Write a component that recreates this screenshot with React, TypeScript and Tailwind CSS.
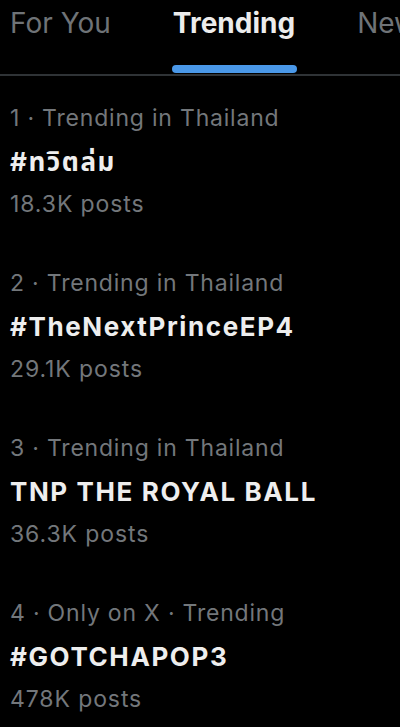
import React from 'react';

const trends = [
  { meta: '1 · Trending in Thailand', title: '#ทวิตล่ม', posts: '18.3K posts' },
  { meta: '2 · Trending in Thailand', title: '#TheNextPrinceEP4', posts: '29.1K posts' },
  { meta: '3 · Trending in Thailand', title: 'TNP THE ROYAL BALL', posts: '36.3K posts' },
  { meta: '4 · Only on X · Trending', title: '#GOTCHAPOP3', posts: '478K posts' },
];

const App: React.FC = () => {
  return (
    <div
      className="w-[400px] h-[727px] overflow-hidden bg-black text-[#e7e9ea]"
      style={{ fontFamily: 'Inter, "Noto Sans", "Noto Sans Thai", sans-serif' }}
    >
      <div className="relative h-[76px] border-b-2 border-[#2f3336]">
        <div className="flex items-start pt-[4px] whitespace-nowrap">
          <div className="ml-[10px] text-[28px] leading-[38px] text-[#6f7377]">For You</div>
          <div className="ml-[62px] flex flex-col items-center">
            <span className="text-[28px] leading-[38px] font-bold text-[#ececec]">Trending</span>
          </div>
          <div className="ml-[62px] text-[28px] leading-[38px] text-[#6f7377]">New</div>
        </div>
        <div className="absolute left-[172px] top-[65px] h-[8px] w-[125px] rounded-full bg-[#4a98e8]" />
      </div>

      <div className="pt-[21px]">
        {trends.map((t) => (
          <div key={t.title} className="px-[10px] pb-[36px]">
            <div className="text-[23px] leading-[43px] tracking-[0.8px] text-[#73777b]">{t.meta}</div>
            <div className="text-[26px] leading-[43px] tracking-[1.6px] font-bold text-[#eeeeee]">{t.title}</div>
            <div className="text-[23px] leading-[43px] tracking-[0.9px] text-[#73777b]">{t.posts}</div>
          </div>
        ))}
      </div>
    </div>
  );
};

export default App;
